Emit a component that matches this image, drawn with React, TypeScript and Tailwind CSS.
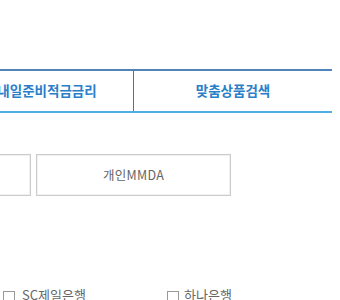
export default function App() {
  const font = { fontFamily: '"Noto Sans CJK KR", "Noto Sans", sans-serif' };
  return (
    <div className="relative w-[340px] h-[300px] overflow-hidden bg-white" style={font}>
      <div className="h-[69px]" />
      <div className="ml-[-39px] w-[371px] flex border-t-2 border-b-2 border-t-[#4f84b8] border-b-[#4eaee4] h-[44px]">
        <div className="w-[173px] shrink-0 border-r border-[#2a7fc4] flex items-center justify-center text-[13.5px] font-bold text-[#2b7ec8] leading-none">
          내일준비적금금리
        </div>
        <div className="flex-1 flex items-center justify-center text-[13.5px] font-bold text-[#2b7ec8] leading-none">
          맞춤상품검색
        </div>
      </div>
      <div className="mt-[41px] ml-[-164px] flex gap-[5px]">
        <div className="w-[195px] h-[42px] shrink-0 border border-[#cccccc] shadow-[inset_0_0_0_1px_#f0f0f0] flex items-center justify-center text-[12.5px] text-[#666]">
          개인MMDA
        </div>
        <div className="w-[195px] h-[42px] shrink-0 border border-[#cccccc] shadow-[inset_0_0_0_1px_#f0f0f0] flex items-center justify-center text-[12.5px] text-[#666] tracking-[0.3px]">
          개인MMDA
        </div>
      </div>
      <div className="mt-[95px] flex items-start">
        <div className="w-[164px] flex items-start">
          <span className="ml-[3px] w-[12px] h-[12px] border border-[#999] shrink-0" />
          <span className="ml-[7px] mt-[-3px] text-[13px] text-[#666] leading-none">SC제일은행</span>
        </div>
        <div className="flex items-start">
          <span className="ml-[3px] w-[12px] h-[12px] border border-[#999] shrink-0" />
          <span className="ml-[5px] mt-[-3px] text-[13px] text-[#666] leading-none">하나은행</span>
        </div>
      </div>
    </div>
  );
}
